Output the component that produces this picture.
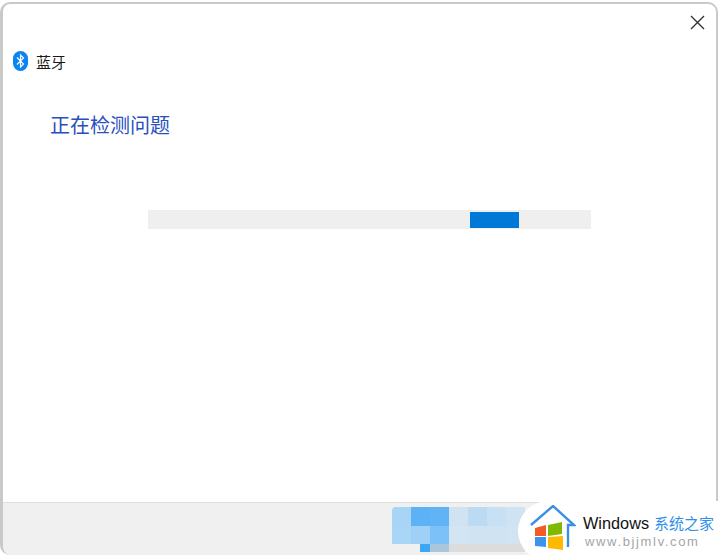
<style>
:global(body) { margin: 0; background: #fff; }
.screen { position: relative; width: 719px; height: 555px; overflow: hidden; background: #fff; font-family: "Liberation Sans", "Noto Sans CJK SC", sans-serif; }
.win { position: absolute; left: 0; top: 2px; width: 713px; height: 551px; border: 2px solid #c9c9c9; border-left-width: 3px; border-bottom: 0; background: #fff; border-radius: 10px 10px 0 10px; display: flex; flex-direction: column; overflow: hidden; }
.close { position: absolute; right: 11px; top: 11px; width: 15px; height: 15px; }
.title { display: flex; align-items: center; gap: 8px; margin: 46px 0 0 10px; height: 22px; font-size: 15px; color: #1a1a1a; font-family: "Noto Sans CJK SC", sans-serif; }
.head { margin: 38px 0 0 47px; font-size: 20px; line-height: 30px; color: #2a4fbd; font-family: "Noto Sans CJK SC", sans-serif; }
.track { margin: 70px 0 0 145px; width: 443px; height: 19px; background: #efefef; display: flex; align-items: center; }
.bar { margin-left: 322px; width: 49px; height: 16px; background: #0078d7; }
.foot { position: absolute; left: 0; right: 0; top: 498px; bottom: 0; background: #f0f0f0; border-top: 1px solid #dfdfdf; }
.mosaic { position: absolute; left: 392px; top: 507px; width: 150px; height: 45px; display: grid; grid-template-columns: repeat(7, 19px); grid-template-rows: 19px 18px 8px; border-radius: 4px 0 0 0; overflow: hidden; }
.mosaic i { display: block; }
.wm { position: absolute; right: 0; top: 501px; width: 201px; height: 60px; background: #fff; border-radius: 30px 0 0 30px; }
.logo { position: absolute; left: 12px; top: 4px; }
.wm1 { position: absolute; left: 65px; top: 12px; font-size: 16.3px; line-height: 20px; color: #111; white-space: nowrap; }
.wm1 span { position: absolute; left: 71px; top: 0; color: #2f8fe8; font-size: 15px; font-family: "Noto Sans CJK SC", sans-serif; }
.wm2 { position: absolute; left: 67px; top: 34px; font-size: 13px; line-height: 14px; letter-spacing: 1.65px; color: #a5a5a5; white-space: nowrap; }
</style>

<div class="screen">
  <div class="win">
    <svg class="close" viewBox="0 0 15 15"><path d="M1 1 14 14M14 1 1 14" stroke="#333" stroke-width="1.4" fill="none"/></svg>
    <div class="title">
      <svg width="15" height="20" viewBox="0 0 15 20"><rect x="0" y="0" width="15" height="20" rx="7.5" fill="#0a84f0"/><path d="M4 6.5 10.5 13 7.5 16V4L10.5 7 4 13.5" stroke="#fff" stroke-width="1.2" fill="none"/></svg>
      <span>蓝牙</span>
    </div>
    <div class="head">正在检测问题</div>
    <div class="track"><div class="bar"></div></div>
    <div class="foot"></div>
  </div>
  <div class="mosaic">
    <i style="background:#a8d4f6"></i><i style="background:#5db2f5"></i><i style="background:#60b3f5"></i><i style="background:#cfe3f3"></i><i style="background:#bcdaf2"></i><i style="background:#c8e0f3"></i><i style="background:#cfe3f2"></i>
    <i style="background:#a9d5f7"></i><i style="background:#9fd0f7"></i><i style="background:#7cc1f7"></i><i style="background:#d3e5f3"></i><i style="background:#cfe3f2"></i><i style="background:#d0e3f2"></i><i style="background:#d2e4f2"></i>
    <i style="background:#f0f0f0"></i><i style="background:linear-gradient(90deg,#f0f0f0 50%,#3aa8f5 50%)"></i><i style="background:#a9c6dc"></i><i style="background:#dcdcdc"></i><i style="background:#dcdcdc"></i><i style="background:#dcdcdc"></i><i style="background:#dcdcdc"></i>
  </div>
  <div class="wm">
    <svg class="logo" width="46" height="48" viewBox="0 0 46 48">
      <path d="M1 20 23 1 44 20H38V42" stroke="#3a8fe8" stroke-width="2.4" fill="none"/>
      <polygon points="5,23 16,20 16,31 5,31" fill="#f25a26"/><polygon points="18,20 32,17 32,29 18,31" fill="#7fba00"/>
      <polygon points="5,32 16,32 16,42 5,41" fill="#3a94ee"/><polygon points="18,32 33,31 33,45 18,43" fill="#ffb900"/>
    </svg>
    <div class="wm1">Windows<span>系统之家</span></div>
    <div class="wm2">www.bjjmlv.com</div>
  </div>
</div>
